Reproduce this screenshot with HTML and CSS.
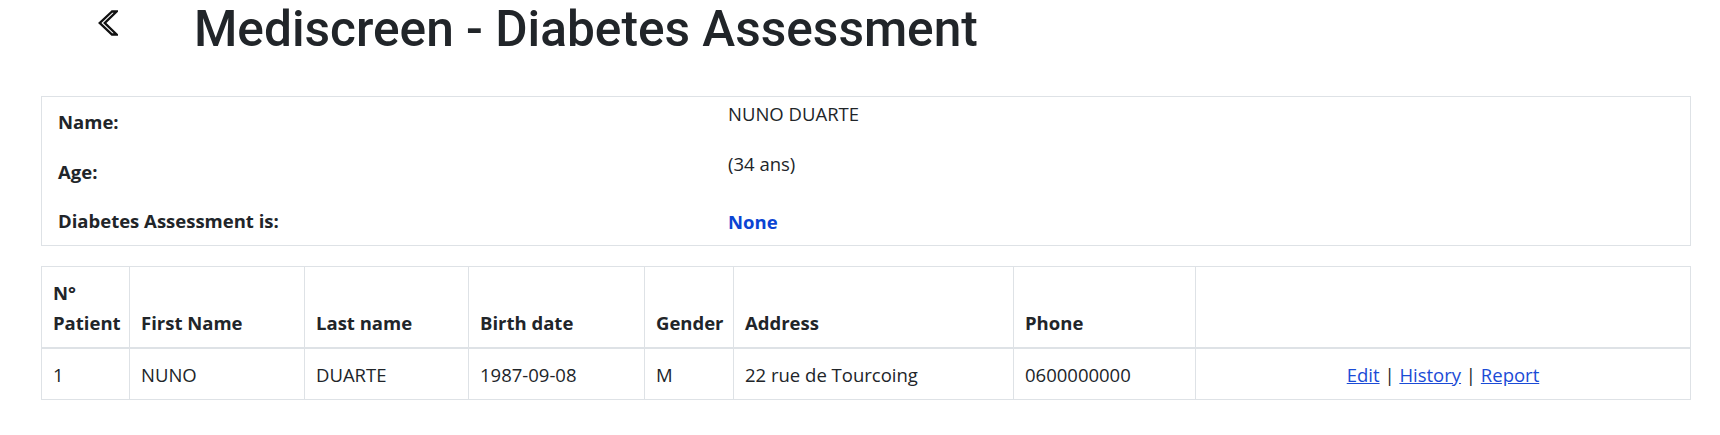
FILE: index.html
```html
<!DOCTYPE html>
<html lang="en">
<head>
<meta charset="utf-8">
<title>Mediscreen - Diabetes Assessment</title>
<link rel="stylesheet" href="styles.css">
</head>
<body>
<header class="top">
  <a class="back" href="#" aria-label="Back">
    <svg class="back-icon" viewBox="0 0 20 26" width="20" height="26">
      <polygon points="14,1.5 1.8,13 14,24.5 18.6,24.5 6.8,13 18.6,1.5" fill="none" stroke="#111" stroke-width="2.4" stroke-linejoin="miter"/>
    </svg>
  </a>
  <h1 class="title">Mediscreen - Diabetes Assessment</h1>
</header>
<main class="page">
  <section class="info">
    <div class="info-row">
      <span class="label">Name:</span>
      <span class="value">NUNO DUARTE</span>
    </div>
    <div class="info-row">
      <span class="label">Age:</span>
      <span class="value">(34 ans)</span>
    </div>
    <div class="info-row info-row-last">
      <span class="label">Diabetes Assessment is:</span>
      <span class="value value-risk">None</span>
    </div>
  </section>

  <table class="patients">
    <colgroup>
      <col class="c1"><col class="c2"><col class="c3"><col class="c4"><col class="c5"><col class="c6"><col class="c7"><col class="c8">
    </colgroup>
    <thead>
      <tr>
        <th>N°<br>Patient</th>
        <th>First Name</th>
        <th>Last name</th>
        <th>Birth date</th>
        <th>Gender</th>
        <th>Address</th>
        <th>Phone</th>
        <th></th>
      </tr>
    </thead>
    <tbody>
      <tr>
        <td>1</td>
        <td>NUNO</td>
        <td>DUARTE</td>
        <td>1987-09-08</td>
        <td>M</td>
        <td>22 rue de Tourcoing</td>
        <td>0600000000</td>
        <td class="actions"><a href="#">Edit</a> | <a href="#">History</a> | <a href="#">Report</a></td>
      </tr>
    </tbody>
  </table>
</main>
</body>
</html>
```

FILE: styles.css
```css
* { box-sizing: border-box; }

body {
  margin: 0;
  background: #fff;
  color: #212529;
  font-family: "Open Sans", "Noto Sans", sans-serif;
  font-size: 18.5px;
  line-height: 24px;
}

.top {
  display: flex;
  align-items: flex-start;
  height: 96px;
  padding-left: 98px;
}

.back {
  display: block;
  margin-top: 10px;
  width: 20px;
  height: 26px;
}

.back-icon { display: block; }

.title {
  margin: -1px 0 0 76px;
  font-family: Roboto, "Open Sans", sans-serif;
  font-size: 49.6px;
  font-weight: 500;
  line-height: 60px;
  color: #212529;
}

.page {
  margin: 0 29px 0 41px;
}

.info {
  border: 1px solid #dee2e6;
}

.info-row {
  display: grid;
  grid-template-columns: 686px 1fr;
  height: 50px;
}

.info-row-last { height: 48px; }

.label {
  align-self: center;
  padding-left: 16px;
  font-weight: 700;
}

.value {
  align-self: start;
  padding-top: 5px;
}

.value-risk {
  align-self: center;
  padding-top: 2px;
  font-weight: 700;
  color: #0b44d3;
}

.patients {
  margin-top: 20px;
  width: 100%;
  border-collapse: collapse;
  table-layout: fixed;
}

.c1 { width: 88px; }
.c2 { width: 175px; }
.c3 { width: 164px; }
.c4 { width: 176px; }
.c5 { width: 89px; }
.c6 { width: 280px; }
.c7 { width: 182px; }
.c8 { width: auto; }

.patients th,
.patients td {
  border: 1px solid #dee2e6;
  text-align: left;
  padding: 0 11px;
}

.patients th {
  vertical-align: bottom;
  white-space: nowrap;
  font-weight: 700;
  line-height: 30px;
  padding-top: 11px;
  padding-bottom: 9px;
  border-bottom: 2px solid #dee2e6;
}

.patients td {
  vertical-align: top;
  padding-top: 14px;
  padding-bottom: 12px;
  height: 51px;
}

.patients td.actions { text-align: center; }

.actions a {
  color: #1a4bd6;
  text-decoration: underline;
}
```
